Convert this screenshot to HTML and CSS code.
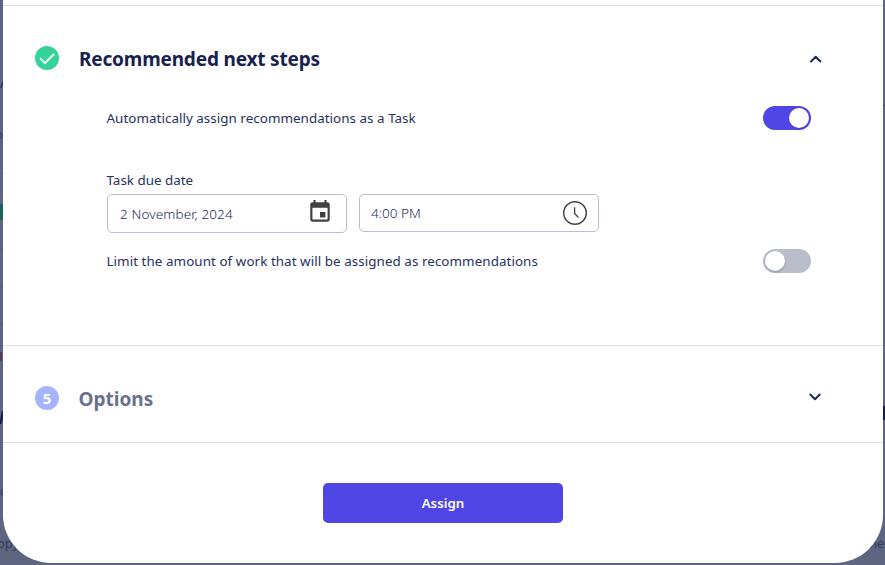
FILE: index.html
```html
<!DOCTYPE html>
<html lang="en">
<head>
  <meta charset="UTF-8" />
  <meta name="viewport" content="width=device-width, initial-scale=1.0"/>
  <title>Assign</title>
  <link rel="stylesheet" href="styles.css">
</head>
<body>

  <!-- Page behind the modal -->
  <div class="backdrop">
    <span class="bg-text bg-a">A</span>
    <span class="bg-text bg-p">o</span>
    <span class="bg-line l1"></span>
    <span class="bg-line l2"></span>
    <span class="bg-line l3"></span>
    <span class="bg-line l4"></span>
    <span class="bg-line l5"></span>
    <span class="bg-green"></span>
    <span class="bg-red"></span>
    <span class="bg-text bg-w">W</span>
    <span class="bg-text bg-c">c</span>
    <span class="bg-text bg-copy">opy</span>
    <span class="bg-navy"></span>
    <span class="bg-text bg-help">he</span>
  </div>

  <div class="modal">
    <section class="step step-open">
      <div class="step-header">
        <svg class="badge" viewBox="0 0 24 24">
          <circle cx="12" cy="12" r="12" fill="#34d399"/>
          <path d="M5.6 12.9l4.3 4.3 8.7-8.7" fill="none" stroke="#fff" stroke-width="1.9" stroke-linecap="round" stroke-linejoin="round"/>
        </svg>
        <h2>Recommended next steps</h2>
        <svg class="chevron" viewBox="0 0 14 10">
          <path d="M2 7.5l4.7-4.7 4.7 4.7" fill="none" stroke="#1e2a5a" stroke-width="2" stroke-linecap="round" stroke-linejoin="round"/>
        </svg>
      </div>

      <div class="step-body">
        <div class="row">
          <span class="label auto-label">Automatically assign recommendations as a Task</span>
          <div class="toggle on"><div class="knob"></div></div>
        </div>

        <div class="label due-label">Task due date</div>
        <div class="fields">
          <div class="field date">
            <span>2 November, 2024</span>
            <svg width="24" height="24" viewBox="0 0 24 24">
              <path d="M17 12h-5v5h5v-5zM16 1v2H8V1H6v2H5c-1.11 0-1.99.9-1.99 2L3 19c0 1.1.89 2 2 2h14c1.1 0 2-.9 2-2V5c0-1.1-.9-2-2-2h-1V1h-2zm3 18H5V8h14v11z" fill="#404040"/>
            </svg>
          </div>
          <div class="field time">
            <span>4:00 PM</span>
            <svg width="26" height="26" viewBox="0 0 26 26">
              <circle cx="13" cy="13" r="11.3" fill="none" stroke="#404040" stroke-width="1.4"/>
              <path d="M12.6 7.2v6.3l3.9 4" fill="none" stroke="#404040" stroke-width="1.3"/>
            </svg>
          </div>
        </div>

        <div class="row">
          <span class="label limit-label">Limit the amount of work that will be assigned as recommendations</span>
          <div class="toggle"><div class="knob"></div></div>
        </div>
      </div>
    </section>

    <section class="step step-closed">
      <div class="step-header">
        <div class="badge number">5</div>
        <h2>Options</h2>
        <svg class="chevron" viewBox="0 0 14 10">
          <path d="M2.3 2.5L7 7.2l4.7-4.7" fill="none" stroke="#1e2a5a" stroke-width="2" stroke-linecap="round" stroke-linejoin="round"/>
        </svg>
      </div>
    </section>

    <div class="footer">
      <button class="assign-btn">Assign</button>
    </div>
  </div>

</body>
</html>
```
FILE: styles.css
```css
* {
  box-sizing: border-box;
}
body {
  margin: 0;
  height: 565px;
  overflow: hidden;
  background: #5e6580;
  font-family: "Noto Sans", sans-serif;
  color: #1e2a5a;
}
.backdrop span {
  position: absolute;
}
.bg-text {
  font-size: 13px;
  line-height: 16px;
  color: #353c5c;
}
.bg-a {
  left: 0;
  top: 75px;
  color: #1e2a5a;
}
.bg-p {
  left: -5px;
  top: 126px;
}
.bg-line {
  left: 0;
  width: 3px;
  height: 1px;
  background: #535a76;
}
.l1 {
  top: 105px;
  left: 883px;
  width: 2px;
  background: #353c5c;
}
.l2 {
  top: 173px;
}
.l3 {
  top: 249px;
}
.l4 {
  top: 286px;
}
.l5 {
  top: 323px;
}
.bg-green {
  left: 0;
  top: 204px;
  width: 3px;
  height: 16px;
  background: #1b625f;
}
.bg-red {
  left: 0;
  top: 352px;
  width: 2px;
  height: 9px;
  background: #513e55;
}
.bg-w {
  left: -12px;
  top: 410px;
  font-size: 17px;
  font-weight: 700;
  color: #111d4d;
}
.bg-c {
  left: 0;
  top: 483px;
}
.bg-copy {
  left: -3px;
  top: 535px;
}
.bg-navy {
  left: 883px;
  top: 406px;
  width: 2px;
  height: 14px;
  background: #111d4d;
}
.bg-help {
  left: 869px;
  top: 535px;
}
.modal {
  position: relative;
  width: 880px;
  height: 563px;
  margin-left: 3px;
  padding-top: 5px;
  background: #fff;
  border-radius: 0 0 48px 48px;
}
.step {
  border-top: 1px solid #e1e2e6;
}
.step-open {
  height: 340px;
  padding-top: 38px;
}
.step-closed {
  height: 97px;
  padding-top: 38px;
}
.step-header {
  display: flex;
  align-items: center;
  height: 28px;
  padding: 0 60.5px 0 32px;
}
.badge {
  width: 24px;
  height: 24px;
  flex: none;
}
.number {
  border-radius: 50%;
  background: #a5b4fc;
  color: #fff;
  font-size: 15px;
  font-weight: 700;
  line-height: 25px;
  text-align: center;
}
h2 {
  flex: 1;
  margin: 2px 0 0 20px;
  font-size: 19px;
  line-height: 28px;
  font-weight: 700;
  color: #17224f;
  letter-spacing: -0.17px;
}
.step-closed h2 {
  margin-left: 19.5px;
  color: #69718f;
  letter-spacing: 0;
}
.chevron {
  width: 14px;
  height: 10px;
  margin-top: 2px;
}
.step-closed .chevron {
  margin: -2px 1px 0 0;
}
.step-body {
  padding: 34px 72px 0 103.5px;
}
.row {
  display: flex;
  justify-content: space-between;
  align-items: center;
  height: 24px;
}
.label {
  font-size: 13.4px;
  line-height: 20px;
  font-weight: 400;
  color: #26315f;
}
.auto-label {
  letter-spacing: 0.04px;
}
.limit-label {
  letter-spacing: 0.06px;
}
.due-label {
  margin-top: 40px;
}
.fields {
  display: flex;
  align-items: flex-start;
  gap: 12px;
  height: 59px;
  margin-left: 0.5px;
  padding-top: 4px;
}
.field {
  display: flex;
  justify-content: space-between;
  align-items: center;
  width: 240px;
  border: 1px solid #b9bdd0;
  border-radius: 5px;
  font-size: 13.5px;
  font-weight: 300;
}
.date {
  height: 39px;
  padding: 0 13px 0 12px;
  letter-spacing: 0.13px;
}
.date svg {
  width: 26px;
  height: 26px;
  margin-bottom: 3px;
}
.time {
  height: 38px;
  padding: 0 10px 0 11px;
}
.toggle {
  display: flex;
  width: 48px;
  height: 24px;
  padding: 2px;
  border-radius: 12px;
  background: #b9bdca;
}
.toggle.on {
  justify-content: flex-end;
  background: #4f46e5;
}
.knob {
  width: 20px;
  height: 20px;
  border-radius: 50%;
  background: #fff;
  box-shadow: 0 1px 2px rgba(30, 42, 90, 0.3);
}
.footer {
  display: flex;
  justify-content: center;
  padding-top: 40px;
  border-top: 1px solid #e1e2e6;
}
.assign-btn {
  width: 240px;
  height: 40px;
  border: none;
  border-radius: 5px;
  background: #4f46e5;
  color: #fff;
  font-family: inherit;
  font-size: 13.3px;
  font-weight: 600;
  cursor: pointer;
}
```
